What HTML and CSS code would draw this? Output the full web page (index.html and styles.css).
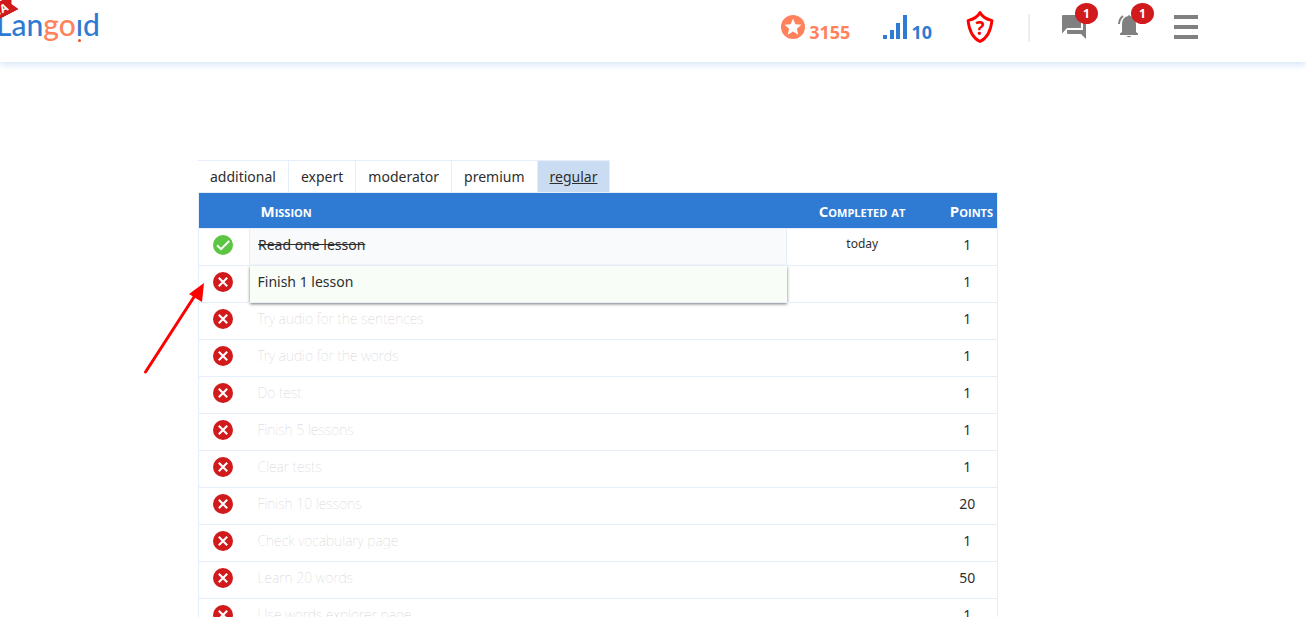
FILE: index.html
```html
<!DOCTYPE html>
<html lang="en">
<head>
<meta charset="utf-8">
<title>Langoid – Missions</title>
<link rel="stylesheet" href="styles.css">
</head>
<body>
<svg class="defs" aria-hidden="true">
  <symbol id="cross" viewBox="0 0 20 20"><circle cx="10" cy="10" r="10" fill="#d01a1c"/><path d="M5.800 5.800l8.400 8.400M14.200 5.800l-8.400 8.400" stroke="#fff" stroke-width="2.100"/></symbol>
  <symbol id="check" viewBox="0 0 20 20"><circle cx="10" cy="10" r="10" fill="#5cc643"/><path d="M4 10.200l4 4L16.200 6" stroke="#fff" stroke-width="2" fill="none"/></symbol>
</svg>
<header class="topbar">
  <a class="logo" href="#" aria-label="Langoid">Lan<span class="logo-accent">go</span><span class="logo-i">ı</span>d</a>
  <span class="ribbon">BETA</span>
  <nav class="stats">
    <a class="stat stat-points" href="#">
      <svg width="24" height="24" viewBox="0 0 24 24"><circle cx="12" cy="12" r="12" fill="#ff825c"/><path d="M12 3.700l2.400 5.500 6 .6-4.500 4 1.300 5.900-5.200-3.100-5.200 3.100 1.300-5.900-4.500-4 6-.6z" fill="#fff"/></svg>
      <span>3155</span>
    </a>
    <a class="stat stat-level" href="#">
      <svg width="24" height="24" viewBox="0 0 24 24" fill="#2f7bd3"><path d="M0 20h4v4H0zM7 15h4v9H7zM13 8h4v16h-4zM20 0h4v24h-4z"/></svg>
      <span>10</span>
    </a>
    <a class="shield" href="#" aria-label="Help">
      <svg width="28" height="34" viewBox="0 0 28 34"><path d="M14 2.500Q11 8.500 2 10.500Q4 27 14 31.500Q24 27 26 10.500Q17 8.500 14 2.500Z" fill="#fff" stroke="#f00" stroke-width="2.800" stroke-linejoin="round"/></svg>
      <span class="shield-mark">?</span>
    </a>
    <span class="divider"></span>
    <button class="icon-button chat" aria-label="Messages">
      <svg width="24" height="24" viewBox="0 0 24 24" fill="#808080"><path d="M0 1q0-1 1-1h18v13H5l-5 5.500z"/><path d="M21 5h3v19l-5-5H6q-1 0-1-1v-3h16z"/></svg>
      <span class="badge">1</span>
    </button>
    <button class="icon-button bell" aria-label="Notifications">
      <svg width="24" height="24" viewBox="0 0 24 24" fill="#808080"><path d="M10 1q1-2 2 0 6 1.500 6 8v8l2 1.500V20H2v-1.500L4 17V9q0-6.500 6-8zM8.500 21h5q-2.500 2.500-5 0z"/><path d="M5 1Q1.200 4 1 9" fill="none" stroke="#808080" stroke-width="2"/></svg>
      <span class="badge">1</span>
    </button>
    <button class="menu" aria-label="Menu"><span></span><span></span><span></span></button>
  </nav>
</header>
<main class="missions">
  <nav class="tabs">
    <a href="#">additional</a>
    <a href="#">expert</a>
    <a href="#">moderator</a>
    <a href="#">premium</a>
    <a class="active" href="#">regular</a>
  </nav>
  <table class="mission-table">
    <colgroup><col class="col-status"><col><col class="col-date"><col class="col-points"></colgroup>
    <thead>
      <tr><th></th><th class="th-mission">Mission</th><th>Completed at</th><th class="th-points">Points</th></tr>
    </thead>
    <tbody>
      <tr class="done"><td class="state"><svg class="status"><use href="#check"/></svg></td><td class="name">Read one lesson</td><td class="date">today</td><td>1</td></tr>
      <tr class="current"><td class="state"><svg class="status"><use href="#cross"/></svg></td><td class="name">Finish 1 lesson</td><td></td><td>1</td></tr>
      <tr><td class="state"><svg class="status"><use href="#cross"/></svg></td><td class="name">Try audio for the sentences</td><td></td><td>1</td></tr>
      <tr><td class="state"><svg class="status"><use href="#cross"/></svg></td><td class="name">Try audio for the words</td><td></td><td>1</td></tr>
      <tr><td class="state"><svg class="status"><use href="#cross"/></svg></td><td class="name">Do test</td><td></td><td>1</td></tr>
      <tr><td class="state"><svg class="status"><use href="#cross"/></svg></td><td class="name">Finish 5 lessons</td><td></td><td>1</td></tr>
      <tr><td class="state"><svg class="status"><use href="#cross"/></svg></td><td class="name">Clear tests</td><td></td><td>1</td></tr>
      <tr><td class="state"><svg class="status"><use href="#cross"/></svg></td><td class="name">Finish 10 lessons</td><td></td><td>20</td></tr>
      <tr><td class="state"><svg class="status"><use href="#cross"/></svg></td><td class="name">Check vocabulary page</td><td></td><td>1</td></tr>
      <tr><td class="state"><svg class="status"><use href="#cross"/></svg></td><td class="name">Learn 20 words</td><td></td><td>50</td></tr>
      <tr><td class="state"><svg class="status"><use href="#cross"/></svg></td><td class="name">Use words explorer page</td><td></td><td>1</td></tr>
    </tbody>
  </table>
  <svg class="pointer" width="64" height="94" viewBox="0 0 64 94" aria-hidden="true"><path d="M3.500 90L52 15" stroke="#f00" stroke-width="3" stroke-linecap="round"/><path d="M62 1L47 12l13 8z" fill="#f00"/></svg>
</main>
</body>
</html>
```
FILE: styles.css
```css
* { box-sizing: border-box; }
body {
  margin: 0;
  min-height: 100vh;
  overflow: hidden;
  background: #fff;
  color: #2e2e2e;
  font: 14px/20px "Noto Sans", "Open Sans", sans-serif;
}
a { color: inherit; text-decoration: none; }
button { padding: 0; border: 0; background: none; }
svg { display: block; }
.defs { position: absolute; width: 0; height: 0; }

.topbar {
  position: relative;
  display: flex;
  justify-content: space-between;
  height: 62px;
  padding-right: 108px;
  box-shadow: 0 2px 8px #cfe0f6;
}
.logo {
  margin-left: -4px;
  padding-top: 6px;
  color: #2f7bd3;
  font: 500 30px/36px Lato, sans-serif;
}
.logo-accent { color: #ff825c; }
.logo-i { position: relative; }
.logo-i::after {
  content: "";
  position: absolute;
  left: 50%;
  bottom: 0;
  width: 3px;
  height: 3px;
  margin-left: -1px;
  border-radius: 50%;
  background: #f4501e;
}
.ribbon {
  position: absolute;
  top: 6px;
  left: -34px;
  width: 52px;
  height: 16px;
  padding-right: 9px;
  background: #d01a1c;
  clip-path: polygon(0 0, 100% 0, 92% 50%, 100% 100%, 0 100%);
  color: #fff;
  font-size: 11px;
  font-weight: 700;
  line-height: 16px;
  text-align: right;
  transform: rotate(-27deg);
}
.stats { display: flex; align-items: flex-start; padding-top: 15px; }
.stat {
  display: flex;
  gap: 4px;
  font-size: 18px;
  font-weight: 700;
  line-height: 24px;
}
.stat span { padding-top: 5px; }
.stat-points { margin-right: 33px; color: #ff825c; }
.stat-level { margin-right: 34px; color: #2f7bd3; }
.shield { position: relative; margin: -5px 34px 0 0; }
.shield-mark {
  position: absolute;
  inset: 0;
  color: #f00;
  font-size: 19px;
  font-weight: 700;
  line-height: 36px;
  text-align: center;
}
.divider { width: 2px; height: 28px; margin: -1px 32px 0 0; background: #eee; }
.icon-button { position: relative; }
.chat { margin-right: 32px; }
.bell { margin-right: 32px; }
.badge {
  position: absolute;
  top: -12px;
  left: 13px;
  width: 23px;
  height: 21px;
  border-radius: 50%;
  background: #d01a1c;
  color: #fff;
  font: 700 12px/21px "Noto Sans", sans-serif;
  text-align: center;
}
.menu { display: flex; flex-direction: column; gap: 6px; width: 24px; }
.menu span { width: 100%; height: 4px; background: #808080; }

.missions { position: relative; max-width: 998px; padding: 98px 0 0 198px; }
.tabs { display: flex; width: max-content; border-top: 1px solid #e6eefb; }
.tabs a { padding: 6px 12px 5px; border-right: 1px solid #e6eefb; }
.tabs .active { background: #cadcf2; text-decoration: underline; }

.mission-table { width: 100%; border-collapse: collapse; table-layout: fixed; border: 1px solid #e6eefb; }
.col-status { width: 51px; }
.col-date { width: 151px; }
.col-points { width: 60px; }
th {
  height: 36px;
  padding: 0;
  background: #2f7bd3;
  color: #fff;
  font-family: "Open Sans", "Noto Sans", sans-serif;
  font-size: 15px;
  font-variant: small-caps;
  font-weight: 700;
}
.mission-table .th-mission { padding-left: 11px; text-align: left; }
.mission-table .th-points { padding-right: 4px; text-align: right; }
td { height: 37px; padding: 0 0 4px; border-top: 1px solid #e6eefb; text-align: center; }
.state { padding-right: 2px; }
.status { width: 20px; height: 20px; margin: 0 auto; }
.name {
  padding-left: 8px;
  color: #d4d4d4;
  font-weight: 100;
  text-align: left;
}
.date { padding-bottom: 6px; font-size: 12px; }
.done .name {
  border: 1px solid #e6eefb;
  background: #f9fafc;
  color: #2e2e2e;
  font-weight: 400;
  text-decoration: line-through;
}
.current .name {
  background: #f8fdf8;
  box-shadow: 0 1px 3px #777;
  color: #2e2e2e;
  font-weight: 400;
}
.pointer { position: absolute; top: 220px; left: 142px; }
```
